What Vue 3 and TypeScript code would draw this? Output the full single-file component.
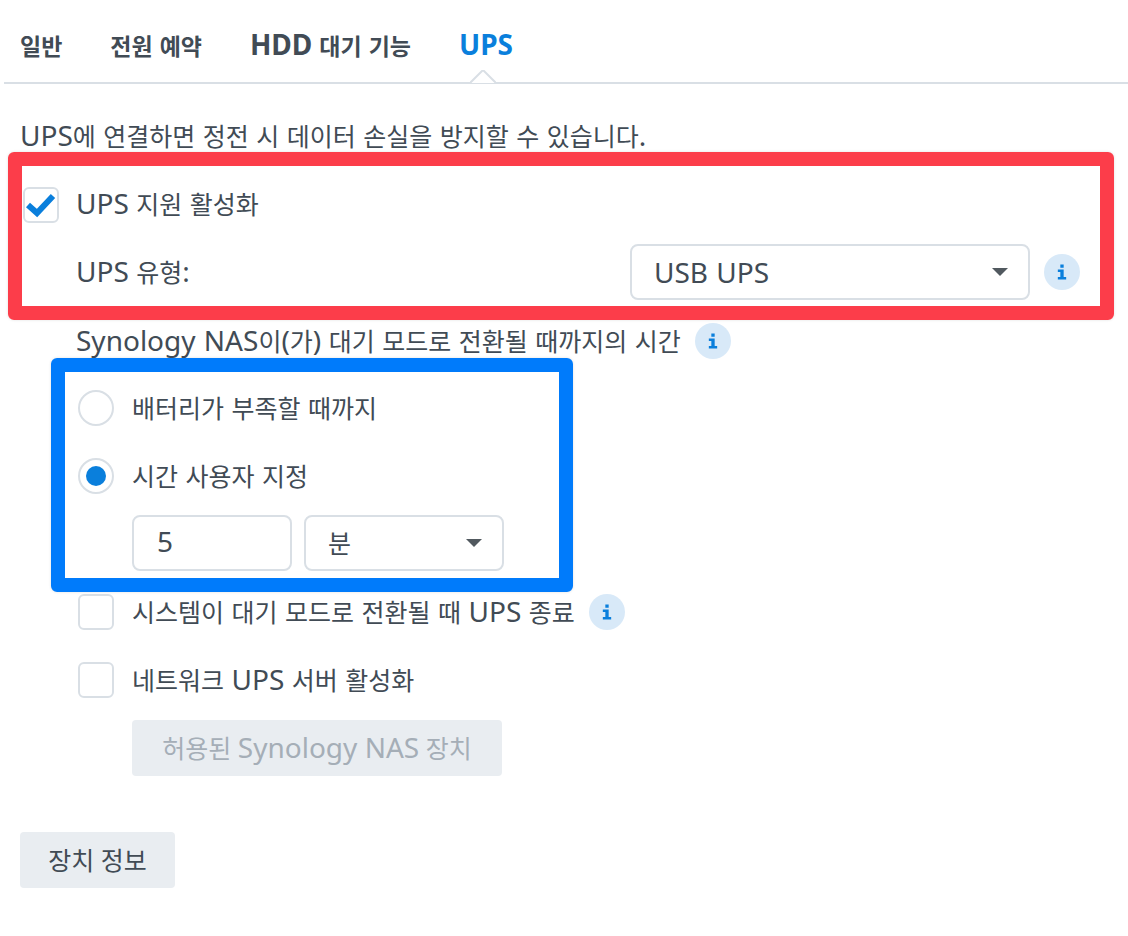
<script setup lang="ts">
const infoPath = 'M4 0h4v4H4zM1 6h7v9h3v3H1v-3h3V9H1z'
</script>

<template>
  <div class="page">
    <nav class="tabs">
      <span class="tab">일반</span>
      <span class="tab">전원 예약</span>
      <span class="tab"><span class="lat">HDD</span> 대기 기능</span>
      <span class="tab active"><span class="lat">UPS</span></span>
      <svg class="notch" width="26" height="14" viewBox="0 0 26 14">
        <path d="M0 13 L13 0 L26 13" fill="#fff" stroke="#d9dfe5" stroke-width="2" />
      </svg>
    </nav>

    <main class="content">
      <p class="desc"><span class="lat">UPS</span>에 연결하면 정전 시 데이터 손실을 방지할 수 있습니다<span class="lat">.</span></p>

      <div class="row first">
        <span class="box checked">
          <svg width="32" height="26" viewBox="0 0 32 26">
            <path d="M3 13 L12 21 L28 4" fill="none" stroke="#0a7fdc" stroke-width="6" />
          </svg>
        </span>
        <span class="label"><span class="lat">UPS</span> 지원 활성화</span>
      </div>

      <div class="row type">
        <span><span class="lat">UPS</span> 유형<span class="lat">:</span></span>
        <div class="type-end">
          <div class="select wide"><span class="lat">USB UPS</span><i class="caret"></i></div>
          <span class="info"><svg viewBox="0 0 12 18"><path :d="infoPath" fill="#0a7fdc" /></svg></span>
        </div>
      </div>

      <div class="row until">
        <span><span class="lat">Synology NAS</span>이<span class="lat">(</span>가<span class="lat">)</span> 대기 모드로 전환될 때까지의 시간</span>
        <span class="info"><svg viewBox="0 0 12 18"><path :d="infoPath" fill="#0a7fdc" /></svg></span>
      </div>

      <div class="indent">
        <div class="row radio-1">
          <span class="radio"></span>
          <span class="label">배터리가 부족할 때까지</span>
        </div>
        <div class="row radio-2">
          <span class="radio on"></span>
          <span class="label">시간 사용자 지정</span>
        </div>
        <div class="fields">
          <div class="input"><span class="lat">5</span></div>
          <div class="select narrow">분<i class="caret"></i></div>
        </div>
        <div class="row check-1">
          <span class="box"></span>
          <span class="label">시스템이 대기 모드로 전환될 때 <span class="lat">UPS</span> 종료</span>
          <span class="info"><svg viewBox="0 0 12 18"><path :d="infoPath" fill="#0a7fdc" /></svg></span>
        </div>
        <div class="row check-2">
          <span class="box"></span>
          <span class="label">네트워크 <span class="lat">UPS</span> 서버 활성화</span>
        </div>
        <button class="btn disabled" type="button" disabled>허용된 <span class="lat">Synology NAS</span> 장치</button>
      </div>

      <button class="btn device" type="button">장치 정보</button>
    </main>

    <div class="mark red"></div>
    <div class="mark blue"></div>
  </div>
</template>

<style scoped>
.page {
  position: relative;
  width: 1128px;
  height: 936px;
  overflow: hidden;
  background: #fff;
  color: #414b55;
  font-family: "Noto Sans", "Noto Sans CJK KR", sans-serif;
  font-size: 25px;
  line-height: 36px;
  word-spacing: 1px;
}
.lat {
  font-size: 28px;
  line-height: 1;
}
.tabs {
  position: relative;
  display: flex;
  gap: 48px;
  height: 84px;
  margin-left: 4px;
  padding: 28px 0 0 16px;
  box-sizing: border-box;
  border-bottom: 2px solid #d9dfe5;
}
.tab {
  font-size: 23px;
  font-weight: 700;
  line-height: 36px;
}
.tab.active { color: #0a7fdc; }
.notch {
  position: absolute;
  left: 466px;
  bottom: -2px;
}
.content {
  padding: 0 20px;
}
.desc {
  margin: 34px 0 0;
  line-height: 36px;
}
.row {
  display: flex;
  align-items: center;
  height: 36px;
}
.first { margin: 33px 0 0 3px; }
.first .label { margin-left: 17px; padding-bottom: 2px; }
.type {
  justify-content: space-between;
  margin: 31px 28px 0 56px;
}
.type-end {
  display: flex;
  align-items: center;
  gap: 14px;
}
.until { margin: 33px 0 0 56px; gap: 14px; }
.indent { margin-left: 58px; }
.radio-1 { margin-top: 31px; }
.radio-2 { margin-top: 32px; }
.label { margin-left: 18px; }
.box, .radio {
  flex: none;
  box-sizing: border-box;
  width: 36px;
  height: 36px;
  border: 2px solid #d9dfe5;
  background: #fff;
}
.box {
  display: flex;
  align-items: center;
  justify-content: center;
  border-radius: 6px;
}
.radio { position: relative; border-radius: 50%; }
.radio.on::after {
  content: "";
  position: absolute;
  inset: 6px;
  border-radius: 50%;
  background: #0a7fdc;
}
.info {
  flex: none;
  display: flex;
  align-items: center;
  justify-content: center;
  width: 36px;
  height: 36px;
  border-radius: 50%;
  background: #d8e9f8;
}
.info svg { width: 10px; height: 16px; }
.check-1 .info { margin-left: 14px; }
.select, .input {
  box-sizing: border-box;
  height: 56px;
  border: 2px solid #d9dfe5;
  border-radius: 8px;
  background: #fff;
  line-height: 50px;
}
.select {
  display: flex;
  align-items: center;
  justify-content: space-between;
  padding: 0 20px 0 22px;
}
.wide { width: 400px; }
.narrow { width: 200px; }
.input { width: 160px; padding-left: 23px; }
.caret {
  width: 0;
  height: 0;
  border-left: 8px solid transparent;
  border-right: 8px solid transparent;
  border-top: 8px solid #51595f;
}
.fields {
  display: flex;
  gap: 12px;
  margin: 21px 0 0 54px;
}
.check-1 { margin-top: 23px; }
.check-2 { margin-top: 32px; }
.btn {
  display: block;
  box-sizing: border-box;
  height: 56px;
  border: 0;
  border-radius: 4px;
  background: #e9edf1;
  color: #414b55;
  font: inherit;
  line-height: 54px;
  padding: 0;
}
.disabled {
  width: 370px;
  margin: 22px 0 0 54px;
  color: #a5aeb7;
}
.device {
  width: 155px;
  margin-top: 56px;
}
.mark {
  position: absolute;
  box-sizing: border-box;
  border-style: solid;
  border-width: 14px;
  border-radius: 6px;
  pointer-events: none;
  box-shadow: 0 0 3px rgba(0, 0, 0, 0.12);
}
.red {
  left: 8px;
  top: 152px;
  width: 1106px;
  height: 168px;
  border-color: #fc3d4a;
}
.blue {
  left: 51px;
  top: 358px;
  width: 522px;
  height: 234px;
  border-color: #007bfb;
}
</style>

<style>
html, body { background: #fff; }
</style>
